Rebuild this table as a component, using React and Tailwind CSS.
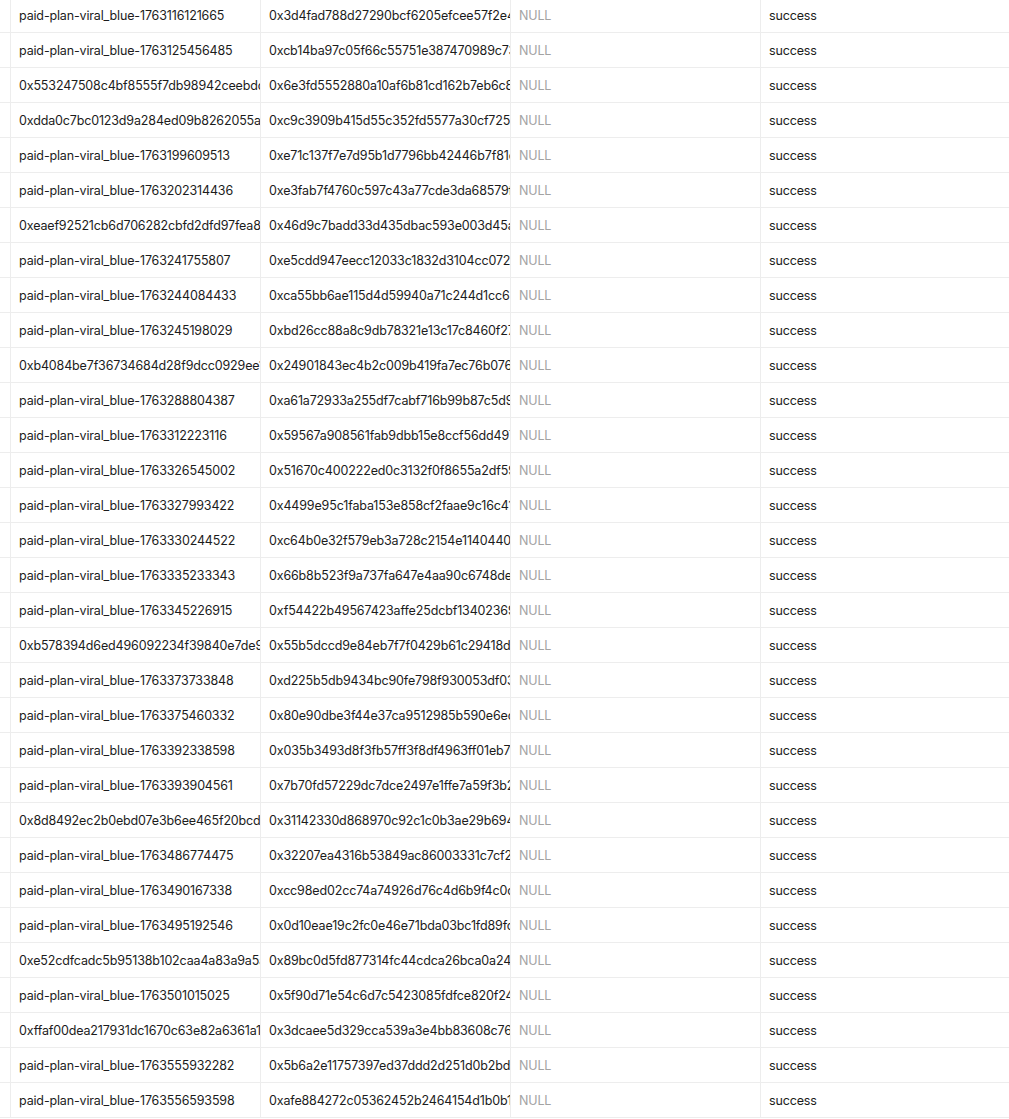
const rows = [
  ['paid-plan-viral_blue-1763116121665', '0x3d4fad788d27290bcf6205efcee57f2e4a1'],
  ['paid-plan-viral_blue-1763125456485', '0xcb14ba97c05f66c55751e387470989c73a'],
  ['0x553247508c4bf8555f7db98942ceebdd4', '0x6e3fd5552880a10af6b81cd162b7eb6c81'],
  ['0xdda0c7bc0123d9a284ed09b8262055aa3', '0xc9c3909b415d55c352fd5577a30cf725c1'],
  ['paid-plan-viral_blue-1763199609513', '0xe71c137f7e7d95b1d7796bb42446b7f81d'],
  ['paid-plan-viral_blue-1763202314436', '0xe3fab7f4760c597c43a77cde3da68579f2'],
  ['0xeaef92521cb6d706282cbfd2dfd97fea8b', '0x46d9c7badd33d435dbac593e003d45a12'],
  ['paid-plan-viral_blue-1763241755807', '0xe5cdd947eecc12033c1832d3104cc0728'],
  ['paid-plan-viral_blue-1763244084433', '0xca55bb6ae115d4d59940a71c244d1cc63'],
  ['paid-plan-viral_blue-1763245198029', '0xbd26cc88a8c9db78321e13c17c8460f27'],
  ['0xb4084be7f36734684d28f9dcc0929ee1f', '0x24901843ec4b2c009b419fa7ec76b0765'],
  ['paid-plan-viral_blue-1763288804387', '0xa61a72933a255df7cabf716b99b87c5d9'],
  ['paid-plan-viral_blue-1763312223116', '0x59567a908561fab9dbb15e8ccf56dd497'],
  ['paid-plan-viral_blue-1763326545002', '0x51670c400222ed0c3132f0f8655a2df59'],
  ['paid-plan-viral_blue-1763327993422', '0x4499e95c1faba153e858cf2faae9c16c41'],
  ['paid-plan-viral_blue-1763330244522', '0xc64b0e32f579eb3a728c2154e11404403'],
  ['paid-plan-viral_blue-1763335233343', '0x66b8b523f9a737fa647e4aa90c6748dec'],
  ['paid-plan-viral_blue-1763345226915', '0xf54422b49567423affe25dcbf13402369'],
  ['0xb578394d6ed496092234f39840e7de9c2', '0x55b5dccd9e84eb7f7f0429b61c29418dc'],
  ['paid-plan-viral_blue-1763373733848', '0xd225b5db9434bc90fe798f930053df03a'],
  ['paid-plan-viral_blue-1763375460332', '0x80e90dbe3f44e37ca9512985b590e6ec1'],
  ['paid-plan-viral_blue-1763392338598', '0x035b3493d8f3fb57ff3f8df4963ff01eb76'],
  ['paid-plan-viral_blue-1763393904561', '0x7b70fd57229dc7dce2497e1ffe7a59f3b2'],
  ['0x8d8492ec2b0ebd07e3b6ee465f20bcd8e', '0x31142330d868970c92c1c0b3ae29b6941'],
  ['paid-plan-viral_blue-1763486774475', '0x32207ea4316b53849ac86003331c7cf2e'],
  ['paid-plan-viral_blue-1763490167338', '0xcc98ed02cc74a74926d76c4d6b9f4c0d1'],
  ['paid-plan-viral_blue-1763495192546', '0x0d10eae19c2fc0e46e71bda03bc1fd89fc'],
  ['0xe52cdfcadc5b95138b102caa4a83a9a5a', '0x89bc0d5fd877314fc44cdca26bca0a245'],
  ['paid-plan-viral_blue-1763501015025', '0x5f90d71e54c6d7c5423085fdfce820f248'],
  ['0xffaf00dea217931dc1670c63e82a6361a1e', '0x3dcaee5d329cca539a3e4bb83608c765a'],
  ['paid-plan-viral_blue-1763555932282', '0x5b6a2e11757397ed37ddd2d251d0b2bd7'],
  ['paid-plan-viral_blue-1763556593598', '0xafe884272c05362452b2464154d1b0b14'],
];

const cell = 'flex h-full items-center overflow-hidden whitespace-nowrap border-r border-[#ededed] pl-2 pt-[2px]';

const App = () => {
  return (
    <div className="h-[1119px] w-full overflow-hidden bg-white font-['Inter',sans-serif] text-[12.5px] tracking-[-0.15px] text-[#1c1c1c]">
      <div className="-mt-[2px]">
        {rows.map(([id, hash], i) => (
          <div
            key={i}
            className="grid h-[35px] grid-cols-[11px_250px_250px_250px_1fr] border-b border-[#ededed]"
          >
            <div className="h-full border-r border-[#ededed]" />
            <div className={cell}>{id}</div>
            <div className={cell}>{hash}</div>
            <div className={`${cell} text-[#a3a3a3]`}>NULL</div>
            <div className="flex h-full items-center overflow-hidden whitespace-nowrap pl-2 pt-[2px]">success</div>
          </div>
        ))}
      </div>
    </div>
  );
};

export default App;
